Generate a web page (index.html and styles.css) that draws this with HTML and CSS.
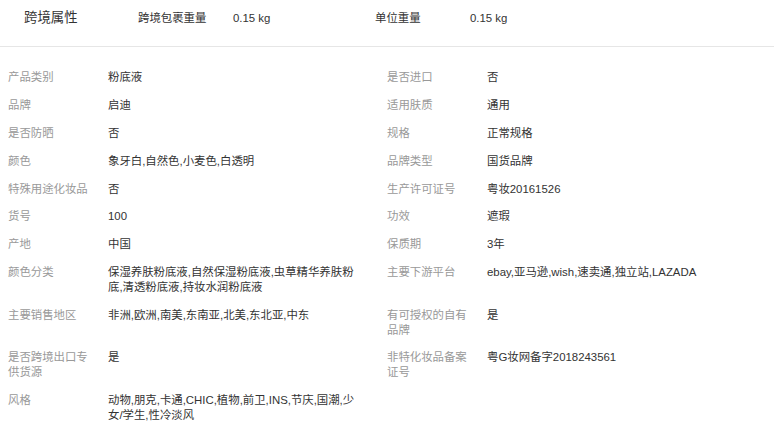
FILE: index.html
```html
<!DOCTYPE html>
<html lang="zh-CN">

<head>
    <meta charset="UTF-8">
    <meta name="viewport" content="width=device-width, initial-scale=1.0">
    <title>商品属性</title>
    <link rel="stylesheet" href="styles.css">
</head>

<body>
    <div class="cross">
        <h3 class="cross-title">跨境属性</h3>
        <div class="cross-item">
            <span class="cross-label">跨境包裹重量</span>
            <span class="cross-value">0.15 kg</span>
        </div>
        <div class="cross-item">
            <span class="cross-label">单位重量</span>
            <span class="cross-value">0.15 kg</span>
        </div>
    </div>

    <ul class="attrs">
        <li><span class="attr-label">产品类别</span><span class="attr-value">粉底液</span></li>
        <li><span class="attr-label">是否进口</span><span class="attr-value">否</span></li>
        <li><span class="attr-label">品牌</span><span class="attr-value">启迪</span></li>
        <li><span class="attr-label">适用肤质</span><span class="attr-value">通用</span></li>
        <li><span class="attr-label">是否防晒</span><span class="attr-value">否</span></li>
        <li><span class="attr-label">规格</span><span class="attr-value">正常规格</span></li>
        <li><span class="attr-label">颜色</span><span class="attr-value">象牙白,自然色,小麦色,白透明</span></li>
        <li><span class="attr-label">品牌类型</span><span class="attr-value">国货品牌</span></li>
        <li><span class="attr-label">特殊用途化妆品</span><span class="attr-value">否</span></li>
        <li><span class="attr-label">生产许可证号</span><span class="attr-value">粤妆20161526</span></li>
        <li><span class="attr-label">货号</span><span class="attr-value">100</span></li>
        <li><span class="attr-label">功效</span><span class="attr-value">遮瑕</span></li>
        <li><span class="attr-label">产地</span><span class="attr-value">中国</span></li>
        <li><span class="attr-label">保质期</span><span class="attr-value">3年</span></li>
        <li><span class="attr-label">颜色分类</span><span class="attr-value">保湿养肤粉底液,自然保湿粉底液,虫草精华养肤粉底,清透粉底液,持妆水润粉底液</span></li>
        <li><span class="attr-label">主要下游平台</span><span class="attr-value">ebay,亚马逊,wish,速卖通,独立站,LAZADA</span></li>
        <li><span class="attr-label">主要销售地区</span><span class="attr-value">非洲,欧洲,南美,东南亚,北美,东北亚,中东</span></li>
        <li><span class="attr-label">有可授权的自有品牌</span><span class="attr-value">是</span></li>
        <li><span class="attr-label">是否跨境出口专供货源</span><span class="attr-value">是</span></li>
        <li><span class="attr-label">非特化妆品备案证号</span><span class="attr-value">粤G妆网备字2018243561</span></li>
        <li><span class="attr-label">风格</span><span class="attr-value">动物,朋克,卡通,CHIC,植物,前卫,INS,节庆,国潮,少女/学生,性冷淡风</span></li>
    </ul>
</body>

</html>
```

FILE: styles.css
```css
* {
    padding: 0;
    margin: 0;
}

body {
    font-family: "Liberation Sans", "Noto Sans CJK SC", sans-serif;
    font-size: 11.4px;
    color: #333;
    background: #fff;
}

/* 跨境属性 */
.cross {
    display: flex;
    align-items: center;
    height: 46px;
    padding-left: 24px;
    border-bottom: 1px solid #e6e6e6;
}

.cross-title {
    width: 114px;
    margin-top: -11px;
    font-size: 13.4px;
    font-weight: normal;
    line-height: 18px;
}

.cross-item {
    display: flex;
    width: 237px;
    margin-top: -11px;
    line-height: 18px;
}

.cross-label {
    width: 95px;
}

/* 属性列表 */
.attrs {
    display: grid;
    grid-template-columns: 379px 379px;
    padding: 17px 8px 0;
    list-style: none;
}

.attrs li {
    display: flex;
    padding: 6.4px 0;
    line-height: 15px;
}

.attr-label {
    width: 85px;
    padding-right: 15px;
    color: #999;
}

.attr-value {
    width: 252px;
}
```
